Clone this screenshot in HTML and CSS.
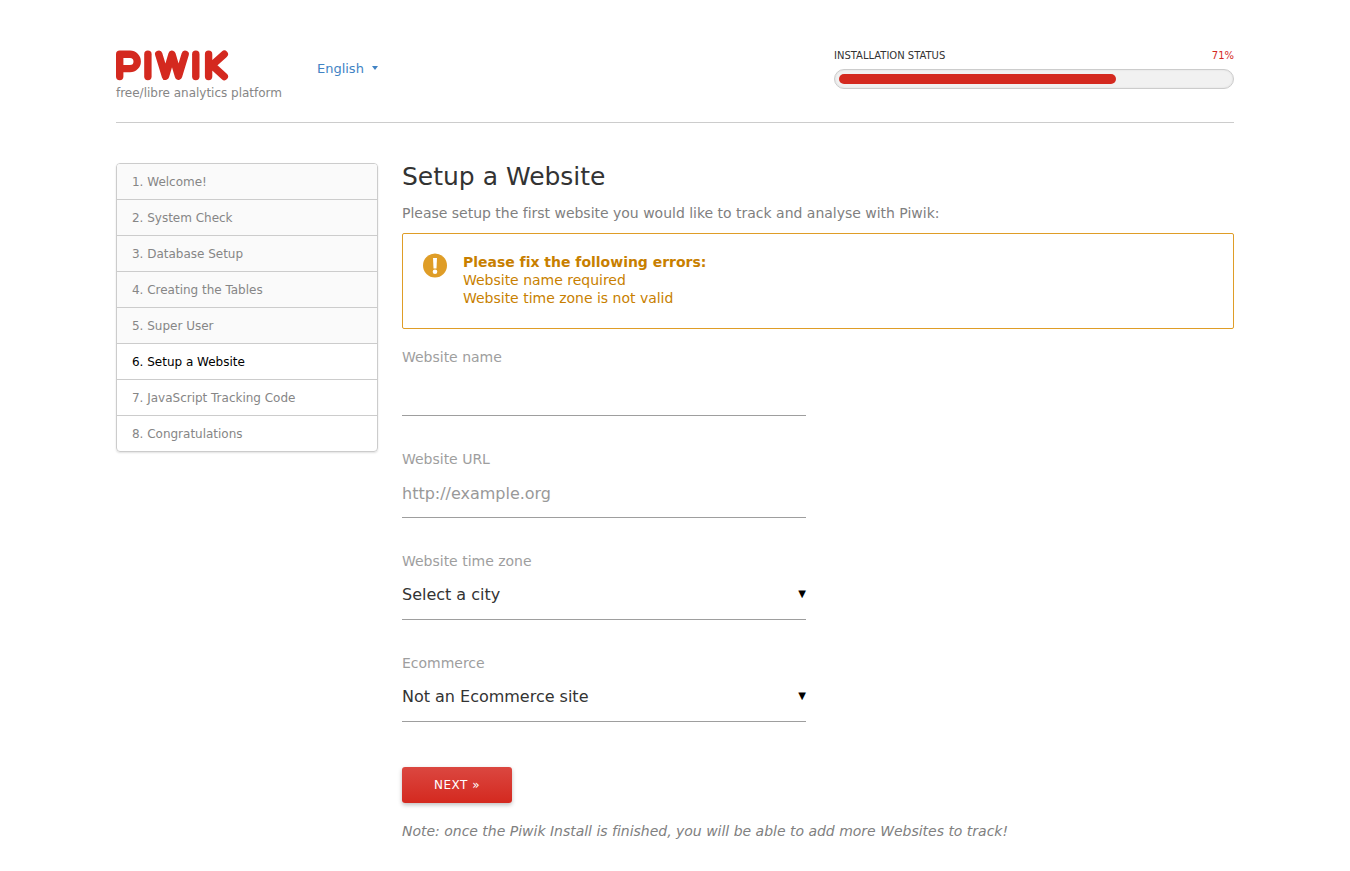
FILE: index.html
```html
<!DOCTYPE html>
<html lang="en">
<head>
<meta charset="utf-8">
<title>Piwik – Setup a Website</title>
<link rel="stylesheet" href="styles.css">
</head>
<body>
<div class="page">
  <header class="header">
    <div class="brand">
      <svg class="logo" viewBox="0 0 114 32" width="114" height="32" role="img" aria-label="Piwik">
        <g fill="none" stroke="#d4291f" stroke-width="7.400" stroke-linecap="round" stroke-linejoin="round">
          <path d="M3.700 27.500V5.200H14a7.200 7.200 0 0 1 0 14.400H3.700"/>
          <path d="M31.900 5.200v22.300"/>
          <path d="M42.700 5.200l6.800 22.100L56 5.200l6.500 22.100L69.200 5.200"/>
          <path d="M79.800 5.200v22.300"/>
          <path d="M92.600 5.200v22.300M108.300 5.200L96 16.300l12.300 11.200"/>
        </g>
      </svg>
      <div class="tagline">free/libre analytics platform</div>
    </div>
    <div class="language">English<span class="caret"></span></div>
    <div class="status">
      <div class="status-text"><span>INSTALLATION STATUS</span><span class="percent">71%</span></div>
      <div class="progress"><div class="bar" style="width:71%"></div></div>
    </div>
  </header>
  <div class="columns">
    <nav class="steps">
      <div class="step done">1. Welcome!</div>
      <div class="step done">2. System Check</div>
      <div class="step done">3. Database Setup</div>
      <div class="step done">4. Creating the Tables</div>
      <div class="step done">5. Super User</div>
      <div class="step current">6. Setup a Website</div>
      <div class="step">7. JavaScript Tracking Code</div>
      <div class="step">8. Congratulations</div>
    </nav>
    <main class="content">
      <h2 class="title">Setup a Website</h2>
      <p class="intro">Please setup the first website you would like to track and analyse with Piwik:</p>
      <div class="alert">
        <svg class="alert-icon" viewBox="0 0 24 25" width="24" height="25"><circle cx="12" cy="12.500" r="12" fill="#df9d27"/><path d="M10 5h4l-.5 10.500h-3z" fill="#fff"/><circle cx="12" cy="18.700" r="2.300" fill="#fff"/></svg>
        <div><strong>Please fix the following errors:</strong><br>Website name required<br>Website time zone is not valid</div>
      </div>
      <div class="field"><label class="label">Website name</label><div class="control"></div></div>
      <div class="field"><label class="label">Website URL</label><div class="control placeholder">http://example.org</div></div>
      <div class="field"><label class="label">Website time zone</label><div class="control select">Select a city<span class="arrow">▼</span></div></div>
      <div class="field"><label class="label">Ecommerce</label><div class="control select">Not an Ecommerce site<span class="arrow">▼</span></div></div>
      <button class="next">NEXT »</button>
      <p class="note">Note: once the Piwik Install is finished, you will be able to add more Websites to track!</p>
    </main>
  </div>
</div>
</body>
</html>
```
FILE: styles.css
```css
* { box-sizing: border-box; }
body { margin: 0; background: #fff; font-family: "DejaVu Sans", sans-serif; color: #333; overflow: hidden; letter-spacing: -.012px; }
.page { width: 1118px; margin: 0 auto; padding-top: 49px; }
.header { display: flex; height: 74px; border-bottom: 1px solid #ccc; }
.brand { width: 201px; }
.logo { display: block; }
.tagline { margin-top: 5px; font-size: 12px; line-height: 14px; color: #868686; }
.language { display: flex; align-items: flex-start; padding-top: 12px; font-size: 13px; line-height: 16px; color: #4183c4; }
.caret { margin: 5px 0 0 8px; border: 3px solid transparent; border-top: 4px solid #4183c4; border-bottom: 0; }
.status { width: 400px; margin-left: auto; }
.status-text { display: flex; justify-content: space-between; padding-top: 1px; font-size: 10px; line-height: 12px; }
.percent { color: #d4291f; }
.progress { height: 20px; margin-top: 7px; padding: 4px; border: 1px solid #ccc; border-radius: 10px; background: #f1f1f1; box-shadow: inset 0 0 2px rgba(0,0,0,.1); }
.bar { height: 10px; border-radius: 5px; background: #d4291f; }
.columns { display: flex; gap: 24px; align-items: flex-start; padding-top: 40px; }
.steps { width: 262px; border: 1px solid #ccc; border-radius: 4px; overflow: hidden; box-shadow: 0 1px 2px rgba(0,0,0,.12); }
.step { height: 36px; padding-left: 15px; font-size: 12px; line-height: 36px; color: #868686; border-bottom: 1px solid #ccc; }
.step:last-child { height: 35px; border-bottom: 0; }
.done { background: #fafafa; }
.step.current { color: #000; }
.content { width: 832px; }
.title { margin: 0; font-size: 25px; line-height: 28px; font-weight: 400; }
.intro { margin: 13px 0 11px; font-size: 14px; line-height: 18px; color: #808080; }
.alert { display: flex; gap: 16px; height: 96px; padding: 19px 20px; border: 1px solid #df9d27; border-radius: 2px; font-size: 14px; line-height: 18px; color: #c87f00; }
.field { width: 404px; height: 102px; padding-top: 19px; }
.label { display: block; font-size: 14px; line-height: 18px; color: #9e9e9e; }
.control { height: 50px; font-size: 16px; line-height: 49px; border-bottom: 1px solid #9e9e9e; }
.placeholder { line-height: 51px; color: #999; }
.select { display: flex; justify-content: space-between; }
.arrow { font-size: 10px; line-height: 47px; color: #000; }
.next { display: block; width: 110px; height: 36px; margin-top: 30px; padding: 0; border: 0; border-radius: 3px; background: linear-gradient(#db4740, #d4291f); box-shadow: 0 2px 4px rgba(0,0,0,.25); font: 12px "DejaVu Sans", sans-serif; letter-spacing: .5px; color: #fff; }
.note { margin: 19px 0 0; font-size: 14px; line-height: 18px; font-style: italic; color: #808080; }
```
